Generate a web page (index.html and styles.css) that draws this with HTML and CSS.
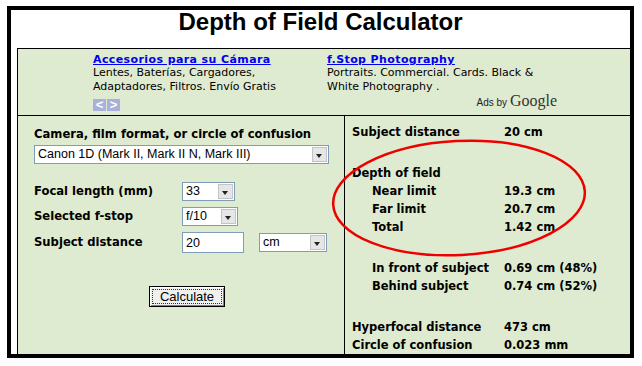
FILE: index.html
```html
<!DOCTYPE html>
<html lang="en">
<head>
  <meta charset="UTF-8">
  <title>Depth of Field Calculator</title>
  <link rel="stylesheet" href="styles.css">
</head>
<body>
  <div class="frame">
    <h1 class="title">Depth of Field Calculator</h1>
    <div class="panel">
      <div class="ads">
        <div class="ad ad-first">
          <a href="#">Accesorios para su Cámara</a>
          <p>Lentes, Baterías, Cargadores,<br>Adaptadores, Filtros. Envío Gratis</p>
          <div class="ad-nav"><span>&lt;</span><span>&gt;</span></div>
        </div>
        <div class="ad ad-second">
          <a href="#">f.Stop Photography</a>
          <p>Portraits. Commercial. Cards. Black &amp;<br>White Photography .</p>
          <div class="ads-by">Ads by <span class="google">Google</span></div>
        </div>
      </div>

      <div class="calc">
        <form class="inputs">
          <div class="field-label">Camera, film format, or circle of confusion</div>
          <div class="combo combo-wide">
            <span class="combo-text">Canon 1D (Mark II, Mark II N, Mark III)</span>
            <span class="combo-btn"></span>
          </div>

          <div class="rows">
            <label>Focal length (mm)</label>
            <div class="combo combo-focal">
              <span class="combo-text">33</span>
              <span class="combo-btn"></span>
            </div>
            <span></span>

            <label>Selected f-stop</label>
            <div class="combo combo-stop">
              <span class="combo-text">f/10</span>
              <span class="combo-btn"></span>
            </div>
            <span></span>

            <label>Subject distance</label>
            <input class="text-in" type="text" value="20">
            <div class="combo combo-unit">
              <span class="combo-text">cm</span>
              <span class="combo-btn"></span>
            </div>
          </div>

          <div class="submit-row">
            <button type="button" class="calc-btn"><span>Calculate</span></button>
          </div>
        </form>

        <div class="results">
          <div class="res-row"><span>Subject distance</span><span>20 cm</span></div>
          <div class="gap"></div>
          <div class="res-row"><span>Depth of field</span><span></span></div>
          <div class="res-row sub"><span>Near limit</span><span>19.3 cm</span></div>
          <div class="res-row sub"><span>Far limit</span><span>20.7 cm</span></div>
          <div class="res-row sub"><span>Total</span><span>1.42 cm</span></div>
          <div class="gap"></div>
          <div class="res-row sub"><span>In front of subject</span><span>0.69 cm (48%)</span></div>
          <div class="res-row sub"><span>Behind subject</span><span>0.74 cm (52%)</span></div>
          <div class="gap"></div>
          <div class="res-row"><span>Hyperfocal distance</span><span>473 cm</span></div>
          <div class="res-row"><span>Circle of confusion</span><span>0.023 mm</span></div>
        </div>
      </div>

      <svg class="circle-mark" width="280" height="140" viewBox="0 0 280 140">
        <ellipse cx="140" cy="70" rx="126" ry="57" transform="rotate(-3 140 70)" fill="none" stroke="#ee0000" stroke-width="2.5"/>
      </svg>
    </div>
  </div>
</body>
</html>
```

FILE: styles.css
```css
* {
  box-sizing: border-box;
}
body {
  margin: 0;
  background: #fff;
  font-family: "DejaVu Sans", Verdana, sans-serif;
  color: #000;
}
.frame {
  margin: 6px 0 0 7px;
  width: 627px;
  height: 352px;
  border: 4px solid #000;
  background: #fff;
  display: flex;
  flex-direction: column;
}
.title {
  margin: 0;
  height: 38px;
  font-family: "Liberation Sans", Arial, sans-serif;
  font-size: 24px;
  font-weight: bold;
  line-height: 24px;
  text-align: center;
}
.panel {
  position: relative;
  flex: 1;
  margin-left: 6px;
  background: #dfebd0;
  border-top: 1px solid #000;
  border-left: 1px solid #000;
  display: flex;
  flex-direction: column;
}

/* ad strip */
.ads {
  height: 67px;
  padding: 4px 0 0 75px;
  border-bottom: 1px solid #000;
  display: flex;
}
.ad {
  font-size: 11px;
  line-height: 13px;
}
.ad-first {
  width: 234px;
}
.ad-second {
  width: 230px;
}
.ad a {
  color: #0000ee;
  font-weight: bold;
  letter-spacing: 0.4px;
  text-decoration: underline;
}
.ad p {
  margin: 0;
  line-height: 14px;
}
.ad-nav {
  margin-top: 5px;
  display: flex;
  gap: 1px;
}
.ad-nav span {
  width: 13px;
  height: 12px;
  background: #a9b0dc;
  color: #fff;
  font-family: "Liberation Sans", Arial, sans-serif;
  font-size: 13px;
  font-weight: bold;
  line-height: 12px;
  text-align: center;
}
.ads-by {
  text-align: right;
  font-family: "Liberation Sans", Arial, sans-serif;
  font-size: 10px;
  line-height: 14px;
  color: #222;
}
.google {
  font-family: "Liberation Serif", "Times New Roman", serif;
  font-size: 16px;
  color: #333;
}

/* calculator */
.calc {
  flex: 1;
  display: flex;
}
.inputs {
  width: 327px;
  margin: 0;
  padding: 11px 0 0 16px;
  border-right: 1px solid #000;
}
.field-label,
.rows label {
  font-size: 11.6px;
  font-weight: bold;
  line-height: 15px;
}
.combo {
  display: flex;
  height: 19px;
  border: 1px solid #7f9db9;
  background: #fff;
  font-family: "Liberation Sans", Arial, sans-serif;
  font-size: 12.5px;
}
.combo-text {
  flex: 1;
  padding-left: 3px;
  line-height: 17px;
  white-space: nowrap;
}
.combo-btn {
  position: relative;
  width: 15px;
  margin: 1px;
  background: #e6e6e6;
  border: 1px solid #c4c4c4;
}
.combo-btn::after {
  content: "";
  position: absolute;
  left: 3px;
  top: 6px;
  border-left: 3.5px solid transparent;
  border-right: 3.5px solid transparent;
  border-top: 4px solid #222;
}
.combo-wide {
  width: 295px;
  margin-top: 3px;
}
.rows {
  margin-top: 18px;
  display: grid;
  grid-template-columns: 148px auto 1fr;
  row-gap: 6px;
  align-items: center;
}
.combo-focal {
  width: 53px;
}
.combo-stop {
  width: 56px;
}
.text-in {
  width: 62px;
  height: 21px;
  border: 1px solid #7f9db9;
  padding: 0 0 0 3px;
  font-family: "Liberation Sans", Arial, sans-serif;
  font-size: 12.5px;
}
.combo-unit {
  width: 68px;
  margin-left: 15px;
}
.submit-row {
  margin-top: 33px;
  padding-left: 115px;
}
.calc-btn {
  width: 76px;
  height: 21px;
  padding: 2px;
  border: 1px solid #000;
  background: #f0f0ee;
  box-shadow: inset 1px 1px #fff, inset -1px -1px #808080;
  font-family: "Liberation Sans", Arial, sans-serif;
  font-size: 13px;
  color: #000;
}
.calc-btn span {
  display: block;
  border: 1px dotted #333;
  line-height: 13px;
}

.results {
  flex: 1;
  padding: 7px 0 0 7px;
  font-size: 11.5px;
  font-weight: bold;
}
.res-row {
  display: flex;
  height: 18px;
  line-height: 18px;
}
.res-row span:first-child {
  width: 152px;
}
.res-row.sub span:first-child {
  padding-left: 20px;
}
.gap {
  height: 23px;
}

.circle-mark {
  position: absolute;
  left: 301px;
  top: 79px;
}
```
